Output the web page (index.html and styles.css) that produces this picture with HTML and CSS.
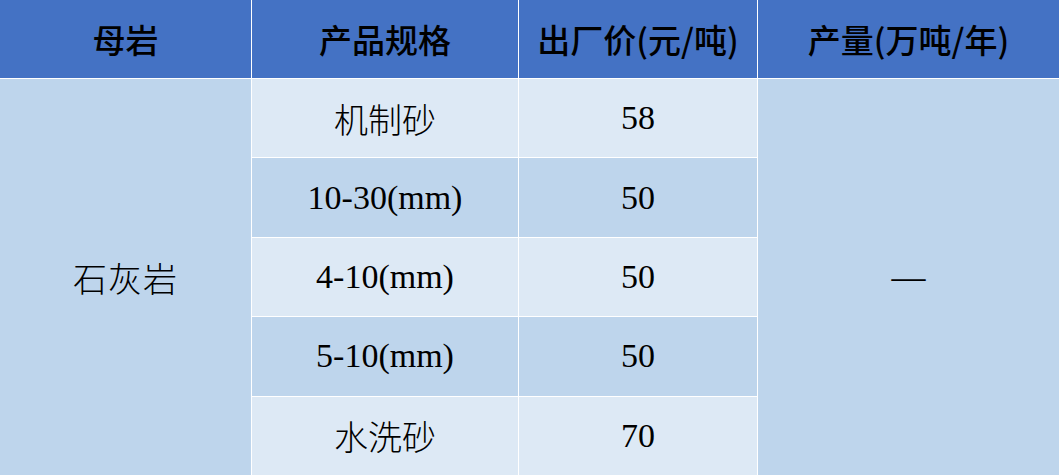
FILE: index.html
```html
<!DOCTYPE html>
<html lang="zh-CN">
<head>
<meta charset="utf-8">
<title>石灰岩产品价格</title>
<link rel="stylesheet" href="styles.css">
</head>
<body>
<div class="table">
  <div class="cell head">母岩</div>
  <div class="cell head">产品规格</div>
  <div class="cell head">出厂价(元/吨)</div>
  <div class="cell head">产量(万吨/年)</div>

  <div class="cell rock">石灰岩</div>
  <div class="cell light">机制砂</div>
  <div class="cell light">58</div>
  <div class="cell output">—</div>

  <div class="cell dark">10-30(mm)</div>
  <div class="cell dark">50</div>

  <div class="cell light">4-10(mm)</div>
  <div class="cell light">50</div>

  <div class="cell dark">5-10(mm)</div>
  <div class="cell dark">50</div>

  <div class="cell light">水洗砂</div>
  <div class="cell light">70</div>
</div>
</body>
</html>
```
FILE: styles.css
```css
html, body {
  margin: 0;
  padding: 0;
  background: #ffffff;
}

.table {
  width: 1059px;
  height: 475px;
  display: grid;
  grid-template-columns: 251px 266px 238px 1fr;
  grid-template-rows: 78px repeat(5, 1fr);
  gap: 1px;
  background: #ffffff;
}

.cell {
  display: flex;
  align-items: center;
  justify-content: center;
  color: #000000;
  font-family: "Liberation Serif", "Noto Sans CJK SC", serif;
  font-size: 34px;
  font-weight: 300;
}

.head {
  background: #4472c4;
  font-family: "Noto Sans CJK SC", sans-serif;
  font-size: 33px;
  font-weight: 500;
}

.rock {
  grid-row: 2 / 7;
  grid-column: 1;
  background: #bed5ec;
  letter-spacing: 1px;
}

.output {
  grid-row: 2 / 7;
  grid-column: 4;
  background: #bed5ec;
}

.light {
  background: #dde9f5;
}

.dark {
  background: #bed5ec;
}
```
